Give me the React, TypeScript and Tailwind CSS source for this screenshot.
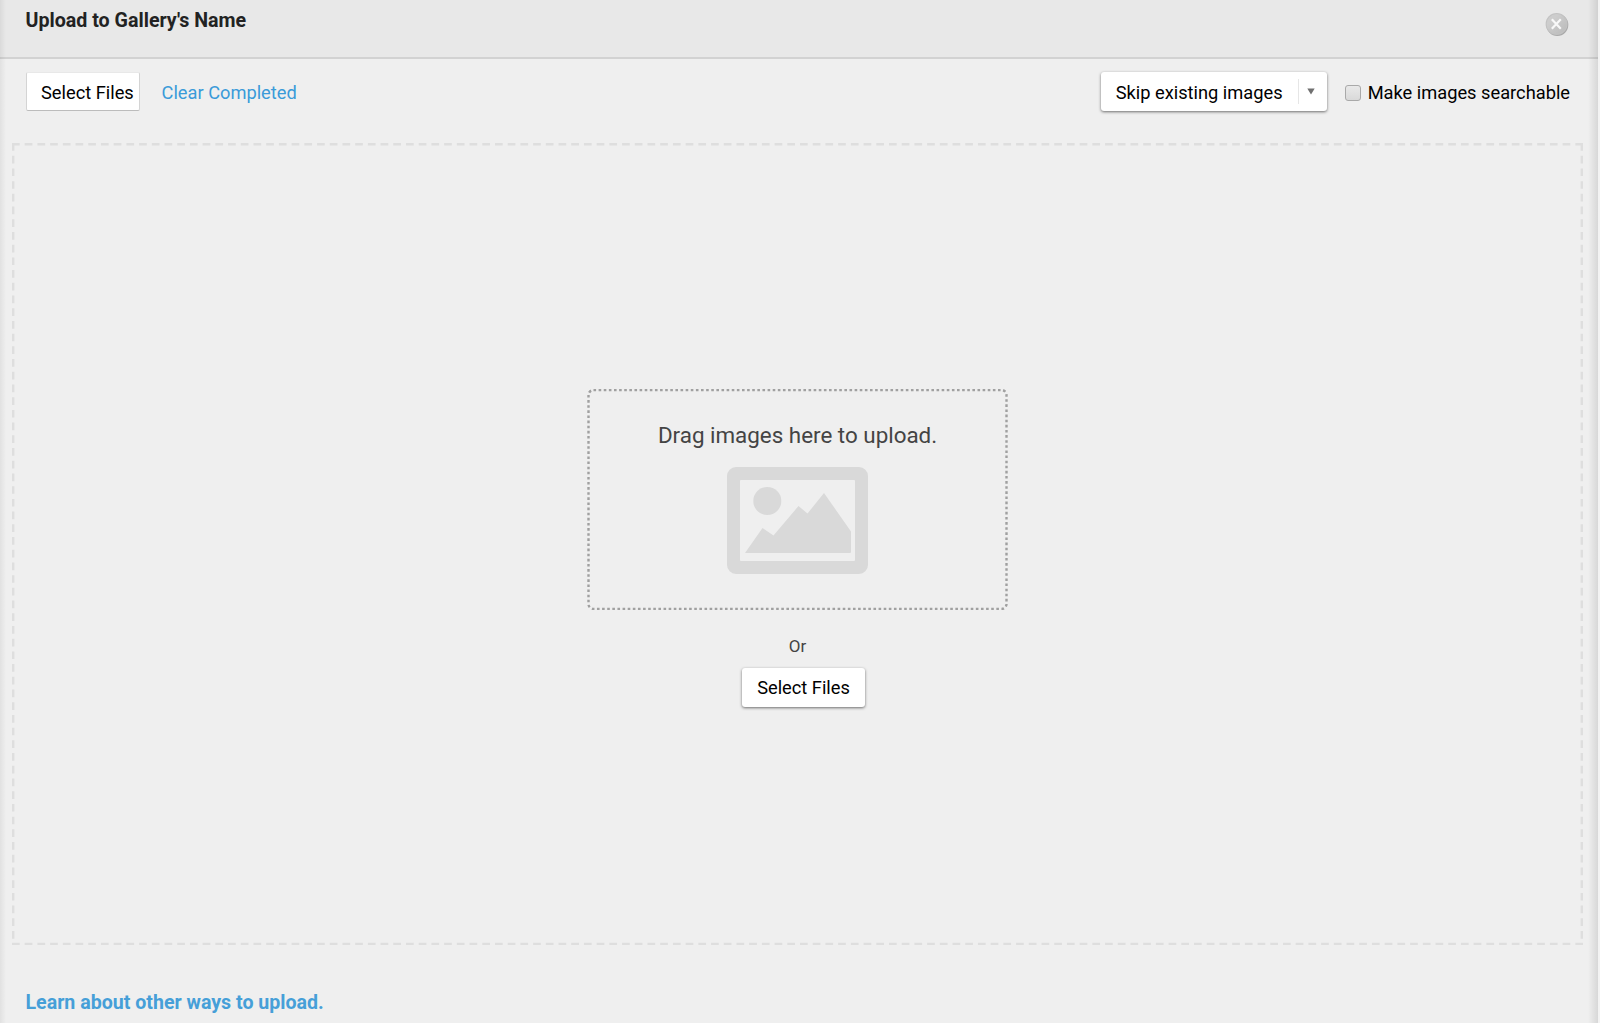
import React, { useState } from "react";

const modes = ["Skip existing images", "Replace existing images"];

function CloseIcon() {
  return (
    <svg width="26" height="26" viewBox="0 0 26 26">
      <defs>
        <linearGradient id="closeFill" x1="0" y1="0" x2="1" y2="1">
          <stop offset="0.3" stopColor="#cdcdcd" />
          <stop offset="1" stopColor="#bababa" />
        </linearGradient>
      </defs>
      <circle cx="13.3" cy="12.9" r="11" fill="#a9a9a9" />
      <circle cx="12.6" cy="12" r="11" fill="#c2c2c2" />
      <circle cx="12.6" cy="12" r="10" fill="url(#closeFill)" />
      <path d="M7.8 7.3l9 9.4M16.8 7.3l-9 9.4" stroke="#f8f8f8" strokeWidth="2.2" />
    </svg>
  );
}

function ImageIcon() {
  return (
    <svg width="141" height="107" viewBox="0 0 141 107" fill="#d9d9d9">
      <path
        fillRule="evenodd"
        d="M9 0h123a9 9 0 0 1 9 9v89a9 9 0 0 1-9 9H9a9 9 0 0 1-9-9V9a9 9 0 0 1 9-9zM14 13a1 1 0 0 0-1 1v79a1 1 0 0 0 1 1h113a1 1 0 0 0 1-1V14a1 1 0 0 0-1-1z"
      />
      <circle cx="40.3" cy="34" r="14" />
      <path d="M18 86L35.5 61L46.5 68.5L71.5 39L80.5 46.5L97 26L124 64.5V85a1 1 0 0 1-1 1z" />
    </svg>
  );
}

function App() {
  const [mode, setMode] = useState(0);
  const [searchable, setSearchable] = useState(false);

  return (
    <div className="flex h-[1023px] w-[1600px] overflow-hidden bg-[#f3f3f3] font-[Roboto,sans-serif] text-black">
      <div className="relative flex w-[1598px] flex-col bg-[#efefef]">
        <header className="flex h-[59px] shrink-0 justify-between border-b-2 border-[#d2d2d2] bg-[#e8e8e8] pr-7 pl-[25.5px]">
          <h1 className="pt-[9px] text-[19.65px] leading-6 font-bold text-[#222]">Upload to Gallery's Name</h1>
          <button className="mt-3 h-[26px] w-[26px]" aria-label="Close">
            <CloseIcon />
          </button>
        </header>

        <div className="flex h-[84px] shrink-0 items-start justify-between pt-[13px] pr-7 pl-[26px] text-[18.25px]">
          <div className="flex items-center">
            <button className="h-[39px] w-[114px] rounded-[2px] border border-t-[#e8e8e8] border-r-[#d4d4d4] border-b-[#bcbcbc] border-l-[#d4d4d4] bg-white pt-0.5 pl-[14px] text-left whitespace-nowrap">
              Select Files
            </button>
            <a href="#" className="ml-[21.5px] pt-0.5 text-[#3a9bd9]">
              Clear Completed
            </a>
          </div>
          <div className="flex items-center">
            <button
              className="flex h-[39px] w-[226px] items-center rounded-[3px] bg-white pl-[15px] whitespace-nowrap shadow-[0_1px_3px_rgba(0,0,0,0.55)]"
              onClick={() => setMode((mode + 1) % modes.length)}
            >
              <span className="w-[182px] pt-0.5 text-left">{modes[mode]}</span>
              <span className="flex h-[25px] items-center border-l border-[#e6e6e6] pl-2">
                <svg width="8" height="7" viewBox="0 0 8 7">
                  <path d="M0.3 0.5h7.4L4 6.5z" fill="#707070" />
                </svg>
              </span>
            </button>
            <label className="ml-[18px] flex items-center pt-0.5 whitespace-nowrap">
              <input
                type="checkbox"
                className="mr-[7px] h-4 w-4 appearance-none rounded-[3px] border border-[#a9a9a9] bg-linear-to-b from-[#e9e9e9] to-[#d9d9d9] checked:bg-[#3a9bd9]"
                checked={searchable}
                onChange={(e) => setSearchable(e.target.checked)}
              />
              Make images searchable
            </label>
          </div>
        </div>

        <main className="relative ml-3 flex h-[802px] w-[1571px] shrink-0 flex-col items-center pt-[246px]">
          <svg className="absolute inset-0" width="1571" height="802" fill="none" stroke="#dedede" strokeWidth="2.4">
            <path d="M0 1.2H1571M0 801H1571" strokeDasharray="7.7 5.01" />
            <path d="M1.2 0V802M1569.8 0V802" strokeDasharray="7.7 5.01" />
          </svg>
          <div className="relative flex h-[221px] w-[421px] flex-col items-center pt-[31px]">
            <svg className="absolute inset-0" width="421" height="221" fill="none">
              <rect x="1.5" y="1" width="418" height="219" rx="5" stroke="#a0a0a0" strokeWidth="2.4" strokeDasharray="2.6 2.52" />
            </svg>
            <p className="text-[22.4px] leading-[30px] text-[#444]">Drag images here to upload.</p>
            <div className="mt-[17px]">
              <ImageIcon />
            </div>
          </div>
          <p className="mt-[24px] text-[17px] leading-6 text-[#444]">Or</p>
          <button className="mt-[10px] ml-3 h-[39px] w-[123px] rounded-[3px] bg-white text-[18.25px] shadow-[0_1px_3px_rgba(0,0,0,0.55)]">
            Select Files
          </button>
        </main>

        <footer className="pt-[46px] pl-[25.5px]">
          <a href="#" className="text-[19.6px] leading-6 font-bold text-[#469fd8]">
            Learn about other ways to upload.
          </a>
        </footer>

        {/* soft shading along the dialog's edges */}
        <div className="pointer-events-none absolute inset-y-0 left-0 w-1.5 bg-linear-to-r from-black/6 to-transparent" />
        <div className="pointer-events-none absolute inset-y-0 right-0 w-2.5 bg-linear-to-l from-black/10 to-transparent" />
      </div>
    </div>
  );
}

export default App;
